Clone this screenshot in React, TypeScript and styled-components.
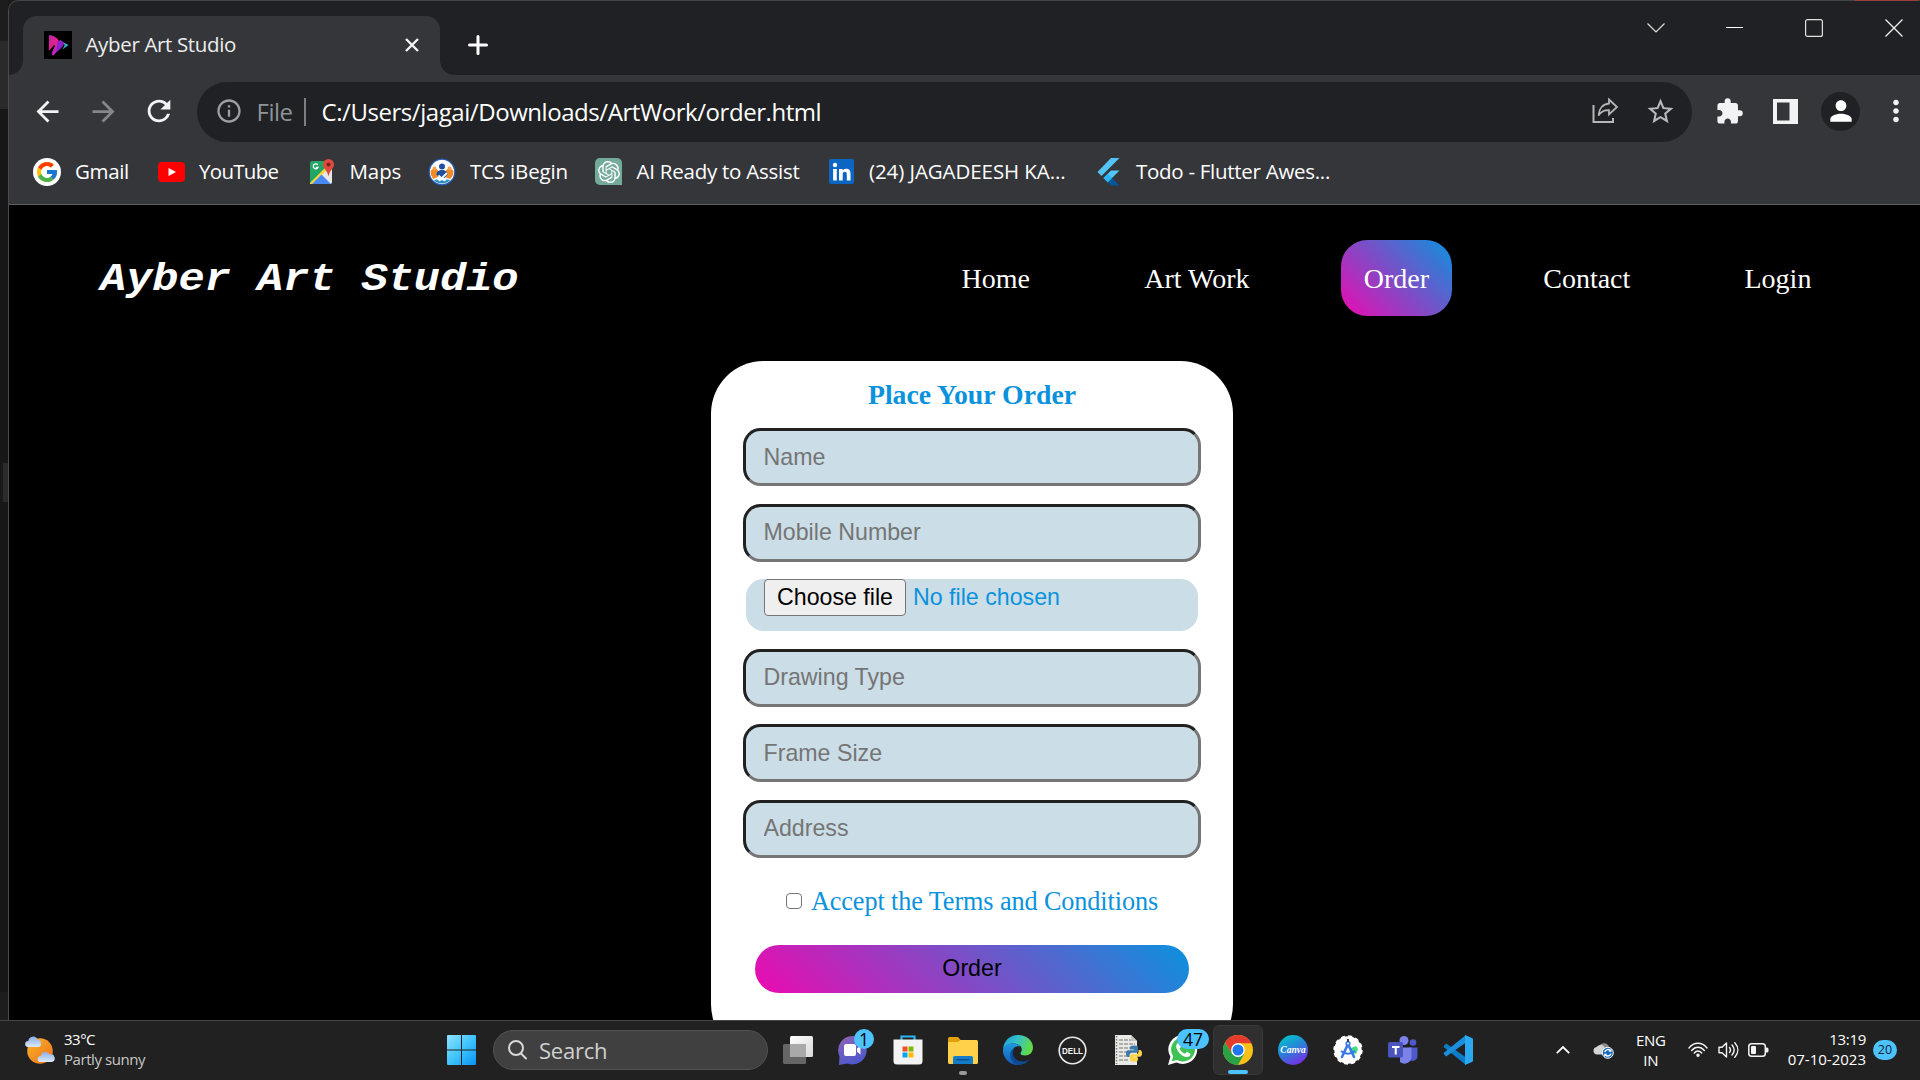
import React from 'react';
import styled, { createGlobalStyle, css } from 'styled-components';
import { FcGoogle } from 'react-icons/fc';
import { MdArrowBack, MdArrowForward, MdRefresh, MdInfoOutline, MdStarBorder, MdExtension, MdPerson, MdMoreVert } from 'react-icons/md';
import { SiOpenai } from 'react-icons/si';

const UI = `'Segoe UI', 'Open Sans', 'Noto Sans', sans-serif`;
const SERIF = `'Times New Roman', 'Liberation Serif', serif`;
const SANS = `Arial, 'Liberation Sans', sans-serif`;
const MONO = `'Courier New', 'Liberation Mono', monospace`;
const BLUE = '#0b92dd';
const GRADIENT = 'linear-gradient(45deg, #ec0ab0, #0b92dd)';

const GlobalStyle = createGlobalStyle`
  * { box-sizing: border-box; }
  body { margin: 0; background: #000; overflow: hidden; }
  svg { display: block; flex: none; }
`;

/* ---------- shell ---------- */
const Desktop = styled.div`
  width: 1920px;
  height: 1080px;
  display: flex;
  flex-direction: column;
  overflow: hidden;
  font-family: ${UI};
`;
const Upper = styled.div`
  display: flex;
  height: 1020px;
  background: #191919;
`;
const Behind = styled.div`
  flex: none;
  width: 8px;
  display: flex;
  flex-direction: column;
`;
const Strip = styled.div<{ $h: number; $c: string; $inset?: number }>`
  height: ${p => p.$h}px;
  margin-left: ${p => p.$inset ?? 0}px;
  background: ${p => p.$c};
`;
const Window = styled.div`
  position: relative;
  flex: 1;
  min-width: 0;
  display: flex;
  flex-direction: column;
  border-left: 1px solid #4a4a4a;
  border-top: 1px solid #444645;
  border-top-left-radius: 10px;
  background: #202124;
`;
const RedEdge = styled.div`
  position: absolute;
  top: -1px;
  right: 2px;
  width: 63px;
  height: 1px;
  background: #9a4038;
`;

/* ---------- title bar ---------- */
const TitleBar = styled.div`
  display: flex;
  height: 74px;
  padding-left: 14px;
`;
const Tab = styled.div`
  position: relative;
  display: flex;
  align-items: center;
  width: 417px;
  height: 59px;
  margin-top: 15px;
  padding: 0 21px 1px 21px;
  background: #35363a;
  border-radius: 14px 14px 0 0;
  &::before, &::after {
    content: '';
    position: absolute;
    bottom: 0;
    width: 14px;
    height: 14px;
  }
  &::before { left: -14px; background: radial-gradient(circle at 0 0, transparent 13.5px, #35363a 14px); }
  &::after { right: -14px; background: radial-gradient(circle at 100% 0, transparent 13.5px, #35363a 14px); }
`;
const Label = styled.span<{ $size: number; $ls?: number; $color?: string }>`
  font-size: ${p => p.$size}px;
  letter-spacing: ${p => p.$ls ?? 0}px;
  color: ${p => p.$color ?? '#fff'};
  line-height: 1.3;
  white-space: nowrap;
`;
const TabTitle = styled(Label)`
  flex: 1;
  margin-left: 13.5px;
  padding-bottom: 1px;
`;
const NewTab = styled.div`
  margin: 34px 0 0 28px;
`;
const Controls = styled.div`
  display: flex;
  flex: none;
  margin-left: auto;
  height: 53px;
`;
const Control = styled.div<{ $last?: boolean; $nudge?: number }>`
  display: flex;
  align-items: center;
  justify-content: ${p => (p.$last ? 'flex-start' : 'center')};
  width: ${p => (p.$last ? 66 : 80)}px;
  padding-left: ${p => (p.$last ? 31 : p.$nudge ?? 0)}px;
`;

/* ---------- toolbar ---------- */
const Toolbar = styled.div`
  display: flex;
  align-items: center;
  height: 74px;
  padding-left: 10px;
  background: #35363a;
  overflow: hidden;
`;
const Slot = styled.div<{ $w: number; $c?: string }>`
  display: flex;
  align-items: center;
  justify-content: center;
  flex: none;
  width: ${p => p.$w}px;
  height: 60px;
  padding-bottom: 1.5px;
  color: ${p => p.$c ?? '#f1f3f4'};
`;
const Omnibox = styled.div`
  display: flex;
  align-items: center;
  flex: none;
  width: 1495px;
  height: 60px;
  margin: 0 10px;
  padding: 0 4.5px 0 18px;
  border-radius: 30px;
  background: #202124;
`;
const Separator = styled.div`
  width: 2px;
  height: 28px;
  margin: 0 15.5px 0 13px;
  background: #7c7e82;
`;
const Path = styled(Label)`
  flex: 1;
  padding-bottom: 1px;
`;
const Scheme = styled(Label)`
  width: 34.5px;
  margin-left: 13.5px;
  padding-bottom: 1px;
`;
const Avatar = styled.div`
  display: flex;
  align-items: center;
  justify-content: center;
  width: 39px;
  height: 39px;
  border-radius: 50%;
  background: #202124;
`;

/* ---------- bookmarks ---------- */
const Bookmarks = styled.div`
  display: flex;
  height: 56px;
  padding: 0 0 10px 24px;
  background: #35363a;
  border-bottom: 1px solid #5d5e61;
`;
const Bookmark = styled.div<{ $w: number }>`
  display: flex;
  align-items: center;
  width: ${p => p.$w}px;
`;
const BookmarkIcon = styled.div`
  display: flex;
  align-items: center;
  justify-content: center;
  width: 28px;
  margin-right: 14px;
`;
const Disc = styled.div<{ $s: number; $bg: string; $r?: string }>`
  display: flex;
  align-items: center;
  justify-content: center;
  width: ${p => p.$s}px;
  height: ${p => p.$s}px;
  border-radius: ${p => p.$r ?? '50%'};
  background: ${p => p.$bg};
  color: #fff;
`;

/* ---------- web page ---------- */
const Page = styled.div`
  flex: 1;
  display: flex;
  flex-direction: column;
  background: #000;
  overflow: hidden;
`;
const Header = styled.header`
  display: flex;
  align-items: center;
  justify-content: space-between;
  height: 156px;
  padding: 0 86px 10px 91px;
  flex: none;
`;
const Brand = styled.h1`
  margin: 2px 0 0;
  font: italic bold 43.75px/50px ${MONO};
  letter-spacing: -0.1px;
  color: #fff;
  transform: scaleY(0.9);
  transform-origin: 0 37px;
`;
const Nav = styled.nav`
  display: flex;
  gap: 69px;
`;
const NavItem = styled.a<{ $active?: boolean }>`
  padding: 22.5px 22.6px;
  border-radius: 26.25px;
  font: 28px/31px ${SERIF};
  color: #fff;
  ${p => p.$active && css`background: ${GRADIENT};`}
`;
const Card = styled.form`
  align-self: flex-start;
  display: flex;
  flex-direction: column;
  align-items: center;
  flex: none;
  width: 522px;
  height: 696px;
  margin-left: 702px;
  border-radius: 52.5px;
  background: #fff;
`;
const CardTitle = styled.h2`
  margin: 18px 0 17.2px;
  font: bold 27.75px/32px ${SERIF};
  color: ${BLUE};
`;
const Field = styled.input`
  width: 458px;
  height: 58px;
  margin: 0 0 17.5px;
  padding: 0 17.5px 0.1px;
  border: 3px solid;
  border-color: #212121 #767676 #767676 #212121;
  border-radius: 17.5px;
  background: #cbdde6;
  font: 23.2px ${SANS};
  outline: none;
  &::placeholder { color: #757575; opacity: 1; }
`;
const FileField = styled.div`
  display: flex;
  align-items: flex-start;
  width: 452px;
  height: 52px;
  margin: 0 0 17.7px;
  padding-left: 18px;
  border-radius: 17.5px;
  background: #cbdde6;
  font: 23.2px/37px ${SANS};
  color: ${BLUE};
`;
const FileButton = styled.button`
  width: 142px;
  height: 37px;
  margin: 0 7px 0 0;
  padding: 0;
  border: 1px solid #767676;
  border-radius: 4px;
  background: #efefef;
  font: 23.2px ${SANS};
  color: #000;
`;
const Terms = styled.label`
  display: flex;
  align-items: center;
  margin-top: 11px;
  font: 26.25px/32px ${SERIF};
  letter-spacing: -0.11px;
  color: ${BLUE};
`;
const Check = styled.span`
  width: 16px;
  height: 16px;
  margin: 0 9px 3px 0;
  border: 1.5px solid #767676;
  border-radius: 4px;
  background: #fff;
`;
const Submit = styled.button`
  width: 434px;
  height: 48px;
  margin-top: 26.5px;
  padding: 0;
  border: 0;
  border-radius: 24px;
  background: ${GRADIENT};
  font: 23.2px ${SANS};
  color: #000;
`;

/* ---------- taskbar ---------- */
const Taskbar = styled.div`
  display: flex;
  align-items: center;
  height: 60px;
  padding: 0 0 1px 25px;
  border-top: 1px solid #454545;
  background: #212121;
`;
const Weather = styled.div`
  display: flex;
  align-items: center;
  gap: 9px;
  width: 409px;
`;
const Lines = styled.div<{ $align?: string; $lift?: number }>`
  display: flex;
  flex-direction: column;
  align-items: ${p => p.$align ?? 'flex-start'};
  margin-bottom: ${p => p.$lift ?? 3}px;
  & > span { line-height: 20px; }
`;
const AppSlot = styled.div<{ $active?: boolean }>`
  position: relative;
  display: flex;
  align-items: center;
  justify-content: center;
  width: 55px;
  height: 50px;
  flex: none;
  ${p => p.$active && css`
    width: 50px;
    margin: 0 2.5px;
    border-radius: 6px;
    background: #2f2f2f;
    border: 1px solid #393939;
  `}
`;
const Search = styled.div`
  display: flex;
  align-items: center;
  gap: 12px;
  width: 275px;
  height: 40px;
  margin: 0 2px 0 4px;
  padding-left: 14px;
  border-radius: 20px;
  border: 1px solid #525252;
  background: #404040;
`;
const Badge = styled.span<{ $w: number; $x: number }>`
  position: absolute;
  left: ${p => p.$x}px;
  top: 4px;
  width: ${p => p.$w}px;
  height: 20px;
  border-radius: 10px;
  background: #4cc2ff;
  color: #000;
  font-size: 17.5px;
  line-height: 20px;
  text-align: center;
`;
const Running = styled.span<{ $w: number; $c: string }>`
  position: absolute;
  bottom: 0;
  left: calc(50% - ${p => p.$w / 2}px);
  width: ${p => p.$w}px;
  height: 4px;
  border-radius: 2px;
  background: ${p => p.$c};
`;
const Tray = styled.div`
  display: flex;
  align-items: center;
  margin-left: auto;
  padding-right: 23px;
`;
const Count = styled.span`
  width: 24px;
  height: 20px;
  margin-left: 7px;
  border-radius: 10px;
  background: #4cc2ff;
  color: #10222c;
  font-size: 12.5px;
  line-height: 20px;
  text-align: center;
`;
const Gap = styled.div<{ $w: number }>`
  width: ${p => p.$w}px;
`;

/* ---------- drawings ---------- */
const Favicon = () => (
  <svg width="28" height="28" viewBox="0 0 28 28">
    <defs>
      <linearGradient id="fv" x1="0" y1="0" x2="0.7" y2="1"><stop offset="0" stopColor="#b02aa8" /><stop offset=".5" stopColor="#e81e8c" /><stop offset="1" stopColor="#9a2be2" /></linearGradient>
    </defs>
    <rect width="28" height="28" fill="#000" />
    <path d="M5 4c5 .5 9.500 3.500 11 8-.5 5-3 9-6.500 12.500-1.500 0-2-1-1.500-3l2.500-8L4.800 20z" fill="url(#fv)" />
    <path d="M13.500 10.500l3-1.500 4 3-2 3.500-6 6z" fill="#8a22c8" />
    <path d="M19.500 11.500l5 2.500-6 4.500 2.200-4z" fill="#35b6d0" />
    <path d="M10.500 14.500l-4 8" stroke="#000" strokeWidth="1.200" />
  </svg>
);
const Maps = () => (
  <svg width="26" height="26" viewBox="0 0 26 26">
    <rect x="1" y="2" width="22" height="23" rx="2" fill="#23a566" />
    <path d="M1 25L23 3v20a2 2 0 0 1-2 2z" fill="#e8e8e8" />
    <path d="M1 24L18 7l2 2L4 25H1z" fill="#fdd83c" />
    <path d="M3 25l9.500-9.500L22 25z" fill="#4a8af4" />
    <path d="M8.800 5.800A2.500 2.500 0 1 0 9 8.500H6.800" fill="none" stroke="#fff" strokeWidth="1.300" />
    <path d="M19.500 0a5.500 5.500 0 0 1 5.500 5.500c0 4-4.500 6-5.500 12-1-6-5.500-8-5.500-12A5.500 5.500 0 0 1 19.500 0z" fill="#dd4b3e" />
    <circle cx="19.500" cy="5.500" r="2" fill="#7a2018" />
  </svg>
);
const Tcs = () => (
  <svg width="28" height="28" viewBox="0 0 28 28">
    <circle cx="14" cy="14" r="12.800" fill="#fff" stroke="#2458b0" strokeWidth="1.300" />
    <path d="M2.500 13c2-2.500 5-3 7-1l4 4 5-4c2-2 5-1.500 7 1 0 3-1 6-3.500 8l-5-2H9.500l-4 2c-2-2-3-5-3-8z" fill="#f08a24" />
    <circle cx="6.500" cy="10.500" r="2" fill="#f5a04a" /><circle cx="21.500" cy="10.500" r="2" fill="#f5a04a" />
    <circle cx="14" cy="8.500" r="3" fill="#1d4fa3" />
    <path d="M8.500 16.500c0-3 2.500-4.500 5.500-4.500s5.500 1.500 5.500 4.500l-3 3.500h-5z" fill="#1d4fa3" />
    <path d="M10.500 17.500l3 3 5.500-5.500" fill="none" stroke="#fff" strokeWidth="1.800" />
    <path d="M6 22.500c2-1.500 4-1.500 5 1l3-1.500 3 1.500c1-2.500 3-2.500 5-1-4 4-12 4-16 0z" fill="#2a8fc4" />
  </svg>
);
const LinkedIn = () => (
  <svg width="25" height="25" viewBox="0 0 25 25">
    <rect width="25" height="25" rx="2" fill="#0a66c2" />
    <circle cx="6" cy="6" r="2.200" fill="#fff" />
    <path d="M4.100 10h3.700v11.500H4.100zM10 10h3.500v1.600c.6-1 1.900-1.900 3.700-1.900 3.500 0 4.300 2.200 4.300 5.300v6.500h-3.700v-5.800c0-1.500-.2-2.900-2-2.900s-2.100 1.400-2.100 2.900v5.800H10z" fill="#fff" />
  </svg>
);
const Flutter = () => (
  <svg width="23" height="28" viewBox="0 0 23 28">
    <path d="M14 0h8.500L4.500 18 0.500 14z" fill="#54c5f8" />
    <path d="M14 12.500h8.500l-7.500 7.500-4.200 4.200-4.300-4.200z" fill="#54c5f8" />
    <path d="M10.800 24.200L15 20l7.500 7.500H14z" fill="#01579b" />
    <path d="M6.500 20l4.300-4.200L15 20l-4.200 4.200z" fill="#29b6f6" />
  </svg>
);
const YouTube = () => (
  <svg width="27" height="20" viewBox="0 0 27 20">
    <rect width="27" height="20" rx="4" fill="#f00" />
    <path d="M10.500 6l7.500 4-7.500 4z" fill="#fff" />
  </svg>
);
const Share = () => (
  <svg width="28" height="28" viewBox="0 0 28 28" fill="none" stroke="#b5b6b8" strokeWidth="2">
    <path d="M2.500 8v17h19.500v-4" />
    <path d="M18 2.500l8 7.500-8 7.500v-4.300c-4.500-.2-8 1.300-10.500 5.300C8 11.500 12 7 18 6.500z" strokeWidth="1.800" />
  </svg>
);
const SidePanel = () => (
  <svg width="25" height="25" viewBox="0 0 25 25">
    <path d="M0 0h25v25H0zM4 3.500v18h12.500v-18z" fill="#f1f3f4" fillRule="evenodd" />
  </svg>
);
const WeatherIcon = () => (
  <svg width="30" height="29" viewBox="0 0 30 29">
    <defs>
      <linearGradient id="sun" x1="0" y1="0" x2="1" y2="1"><stop offset="0" stopColor="#f9b52c" /><stop offset="1" stopColor="#f0701a" /></linearGradient>
      <linearGradient id="cl" x1="0" y1="0" x2="0" y2="1"><stop offset="0" stopColor="#8aaee8" /><stop offset="1" stopColor="#dce9fb" /></linearGradient>
    </defs>
    <circle cx="15" cy="15" r="12.800" fill="url(#sun)" />
    <path d="M3 11a3 3 0 0 1 .3-6A4.800 4.800 0 0 1 12.500 3.500 4 4 0 0 1 14 11z" fill="url(#cl)" />
    <path d="M15.500 26a3 3 0 0 1 .3-6 4.800 4.800 0 0 1 9-1.500 3.800 3.800 0 0 1 2 7.500z" fill="url(#cl)" />
  </svg>
);
const StartIcon = () => (
  <svg width="29" height="30" viewBox="0 0 29 30">
    <defs><linearGradient id="win" x1="0" y1="0" x2="1" y2="1"><stop offset="0" stopColor="#8fe2ff" /><stop offset=".5" stopColor="#3fc4fb" /><stop offset="1" stopColor="#0a94f5" /></linearGradient></defs>
    <path d="M1 0h13v14.500H0V1a1 1 0 0 1 1-1zM15 0h13a1 1 0 0 1 1 1v13.500H15zM0 15.500h14V30H1a1 1 0 0 1-1-1zM15 15.500h14V29a1 1 0 0 1-1 1H15z" fill="url(#win)" />
  </svg>
);
const SearchIcon = () => (
  <svg width="19" height="20" viewBox="0 0 19 20" fill="none" stroke="#d8d8d8" strokeWidth="2" strokeLinecap="round">
    <circle cx="8" cy="8" r="7" /><path d="M13 13.500l5 5" />
  </svg>
);
const TaskView = () => (
  <svg width="30" height="28" viewBox="0 0 30 28">
    <defs><linearGradient id="tv" x1="0" y1="0" x2="1" y2="1"><stop offset="0" stopColor="#fff" /><stop offset="1" stopColor="#d8d8d8" /></linearGradient></defs>
    <rect x="0" y="8" width="23" height="20" rx="1.500" fill="#666" />
    <rect x="7" y="0" width="23" height="21" rx="1.500" fill="url(#tv)" />
    <path d="M7 8h16v13H8.500A1.500 1.500 0 0 1 7 19.500z" fill="#a9a9a9" />
  </svg>
);
const Chat = () => (
  <svg width="29" height="29" viewBox="0 0 29 29">
    <defs><linearGradient id="ch" x1="0" y1="0" x2="0.400" y2="1"><stop offset="0" stopColor="#8f63b8" /><stop offset="1" stopColor="#5059c9" /></linearGradient></defs>
    <path d="M14.500 0a14.200 14.200 0 1 1-5 27.500L1 29l.5-8.500A14.300 14.300 0 0 1 14.500 0z" fill="url(#ch)" />
    <rect x="6" y="8" width="12" height="12" rx="2" fill="#fff" />
    <path d="M19 12.500l3.500-2.800v8.800L19 15.700z" fill="#fff" />
  </svg>
);
const Store = () => (
  <svg width="30" height="30" viewBox="0 0 30 30">
    <path d="M8.500 6V1.500h13V6" fill="none" stroke="#29b6f0" strokeWidth="2.200" />
    <path d="M.5 4.500h29V26a3.500 3.500 0 0 1-3.500 3.500H4A3.500 3.500 0 0 1 .5 26z" fill="#f3f3f3" />
    <path d="M9.500 11.500h5v5h-5z" fill="#f25022" /><path d="M15.500 11.500h5v5h-5z" fill="#7fba00" />
    <path d="M9.500 17.500h5v5h-5z" fill="#00a4ef" /><path d="M15.500 17.500h5v5h-5z" fill="#ffb900" />
  </svg>
);
const Folder = () => (
  <svg width="30" height="27" viewBox="0 0 30 27">
    <path d="M1.500 0H10l3 3.500V8H0V1.500A1.500 1.500 0 0 1 1.500 0z" fill="#e0a10c" />
    <path d="M0 5h10l2.500-2H28.500A1.500 1.500 0 0 1 30 4.500v21a1.500 1.500 0 0 1-1.500 1.500h-27A1.500 1.500 0 0 1 0 25.500z" fill="#ffd04a" />
    <path d="M5 27v-6a2 2 0 0 1 2-2h16a2 2 0 0 1 2 2v6z" fill="#127cc9" />
    <path d="M8.500 22.700h13" stroke="#0a4f8c" strokeWidth="1.400" />
  </svg>
);
const Edge = () => (
  <svg width="30" height="30" viewBox="0 0 30 30">
    <defs>
      <linearGradient id="e1" x1="0" y1="0" x2="1" y2="0.300"><stop offset="0" stopColor="#1b9de2" /><stop offset=".5" stopColor="#35c1c9" /><stop offset="1" stopColor="#5fd94a" /></linearGradient>
      <linearGradient id="e2" x1="0" y1="0" x2="0" y2="1"><stop offset="0" stopColor="#1f9ae0" /><stop offset="1" stopColor="#1258b5" /></linearGradient>
    </defs>
    <path d="M0 14C1 5.500 7 0 15 0c9 0 15 6 15 12.500 0 5-3.500 8-8 8-3 0-4.500-1-4.500-2 0-1 1.300-1.500 1.300-4C18.800 11 15 8.500 10.500 8.500 5.500 8.500 1.500 11 0 14z" fill="url(#e1)" />
    <path d="M0 14c1.500-3.500 5.500-5.500 10.500-5.500 3 0 5.500 1 7 3-5-1.500-8.500 2-8.500 7 0 6 5 10.500 10 11A15 15 0 0 1 0 14z" fill="url(#e2)" />
    <path d="M11.500 13.500c-4 5 0 13 8 13 3 0 6-1 8.500-4-3 5-8 7.500-13 7.500-5.500-2-9-7.500-7.500-12.500.8-2.500 2.500-3.800 4-4z" fill="#0c4a94" />
  </svg>
);
const PyDoc = () => (
  <svg width="22" height="30" viewBox="0 0 22 30">
    <path d="M0 0h16l6 6v24H0z" fill="#e9e9e6" />
    <path d="M4 5h12M4 9h16M4 13h16M4 17h10M4 21h8M4 25h9" stroke="#9b9b98" strokeWidth="1.300" strokeDasharray="4 1" />
    <path d="M1.500 1v28" stroke="#777" strokeWidth="1.500" strokeDasharray="1.500 1.500" />
    <path d="M16 0v6h6z" fill="#c4c4c0" />
  </svg>
);
const PyStack = styled.div`
  position: relative;
  width: 27px;
  height: 30px;
  margin-left: 1px;
`;
const PySnakes = () => (
  <svg width="16" height="17" viewBox="0 0 16 16">
    <path d="M8 0c-3 0-4 .8-4 2.300V4h4.200v.8H2.200C.8 4.800 0 6 0 8s.8 3.500 2 3.500h1.500V9.700C3.500 8.200 4.700 7.200 6 7.200h4c1.300 0 2-.9 2-2V2.300C12 .8 11 0 8 0z" fill="#3b78ab" />
    <path d="M8 16c3 0 4-.8 4-2.300V12H7.800v-.8h6c1.400 0 2.200-1.200 2.200-3.200s-.8-3.500-2-3.500h-1.500v1.800c0 1.500-1.200 2.500-2.500 2.500H6c-1.300 0-2 .9-2 2v2.900C4 15.200 5 16 8 16z" fill="#ffd343" />
  </svg>
);
const SnakeSpot = styled.div`
  position: absolute;
  right: 0;
  top: 10px;
`;
const Dell = () => (
  <svg width="29" height="29" viewBox="0 0 29 29">
    <circle cx="14.500" cy="14.500" r="13.300" fill="none" stroke="#e8e8e8" strokeWidth="1.600" />
    <text x="14.500" y="18" textAnchor="middle" textLength="21" lengthAdjust="spacingAndGlyphs" fontFamily="Liberation Sans" fontWeight="bold" fontSize="9.500" fill="#f4f4f4">DELL</text>
  </svg>
);
const WhatsApp = () => (
  <svg width="30" height="30" viewBox="0 0 30 30">
    <path d="M15.300 0A14.500 14.500 0 1 1 8.500 27.600L0 30l2.400-8.200A14.500 14.500 0 0 1 15.300 0z" fill="#fff" />
    <path d="M15.400 2.500A12 12 0 1 1 9 24.900L3.700 26.300 5.200 21.200A12 12 0 0 1 15.400 2.500z" fill="#3ec254" />
    <path d="M10 8c-2 1-2.500 3.500-1 6.500 2 4 5.500 7 9.500 7.500 2 .2 4-1 4-3.300l-3.500-1.900-1.900 2c-2.500-.9-4.600-3-5.600-5.300l1.600-1.800L11.700 8z" fill="#fff" />
  </svg>
);
const Chrome = () => (
  <svg width="30" height="30" viewBox="0 0 30 30">
    <circle cx="15" cy="15" r="15" fill="#fbc116" />
    <path d="M2 7.500A15 15 0 0 1 28.400 8.200H15l-6.200 10z" fill="#e33b2e" />
    <path d="M2 7.500A15 15 0 0 0 15 30l6.200-11L9 18.500z" fill="#2aa147" />
    <circle cx="15" cy="15" r="6.900" fill="#fff" />
    <circle cx="15" cy="15" r="5.500" fill="#1f78ee" />
  </svg>
);
const Canva = () => (
  <svg width="30" height="30" viewBox="0 0 30 30">
    <defs><linearGradient id="cv" x1="0.200" y1="0" x2="0.700" y2="1"><stop offset="0" stopColor="#00c4cc" /><stop offset=".5" stopColor="#2a7fd8" /><stop offset="1" stopColor="#7d2ae8" /></linearGradient></defs>
    <circle cx="15" cy="15" r="15" fill="url(#cv)" />
    <text x="15" y="18.300" textAnchor="middle" fontFamily="Liberation Serif" fontStyle="italic" fontWeight="bold" fontSize="9.500" fill="#fff">Canva</text>
  </svg>
);
const Studio = () => (
  <svg width="30" height="30" viewBox="0 0 30 30">
    <circle cx="15" cy="15" r="13.700" fill="#fff" stroke="#fff" strokeWidth="2" strokeDasharray="4 3.150" />
    <path d="M18 13l5-2 2 3-2 5-5-1z" fill="#3ddc84" />
    <path d="M15 9L9 22M15 9l6 13" stroke="#3b78e7" strokeWidth="2.600" strokeLinecap="round" />
    <path d="M8 16c4 3.500 10 3.500 14 0" fill="none" stroke="#3b78e7" strokeWidth="2" />
    <circle cx="15" cy="8.500" r="2.600" fill="#3b78e7" /><circle cx="15" cy="8.500" r="1" fill="#fff" />
    <path d="M15 4v3" stroke="#263238" strokeWidth="1.800" />
  </svg>
);
const Teams = () => (
  <svg width="30" height="28" viewBox="0 0 30 28">
    <circle cx="25" cy="6.500" r="3.300" fill="#5059c9" />
    <path d="M21 11.500h8.500V20a5 5 0 0 1-8.500 3.500z" fill="#5059c9" />
    <circle cx="16" cy="4.500" r="4.500" fill="#7b83eb" />
    <path d="M12 11.500h11.500V21a7 7 0 0 1-11.500 5z" fill="#7b83eb" />
    <rect y="6" width="15" height="15.500" rx="1.500" fill="#4b53bc" />
    <path d="M4 10h7.500v2H8.800v6.500H6.700V12H4z" fill="#fff" />
  </svg>
);
const Code = () => (
  <svg width="30" height="30" viewBox="0 0 30 30">
    <path d="M1.200 10.500l2-2L23 22.500V30L1.200 12.500c-.6-.6-.6-1.400 0-2z" fill="#0c7bc8" />
    <path d="M1.200 19.500l2 2L23 7.500V0L1.200 17.500c-.6.600-.6 1.400 0 2z" fill="#1a8fdc" />
    <path d="M22 0l7 3a2 2 0 0 1 1 2v20a2 2 0 0 1-1 2l-7 3z" fill="#2aa8f2" />
  </svg>
);
const CloudSync = () => (
  <svg width="21" height="18" viewBox="0 0 21 18">
    <path d="M6 5a5.500 5.500 0 0 1 10 1l-3 6H6z" fill="#8c8c8c" />
    <path d="M4 13.500A3.800 3.800 0 0 1 3.500 6 5 5 0 0 1 12 7l1 6.500z" fill="#d4d4d4" />
    <circle cx="14.800" cy="11.800" r="5.500" fill="#1769b5" stroke="#fff" strokeWidth="1" />
    <path d="M11.800 11a3.300 3.300 0 0 1 5.500-1.500M17.900 12.600a3.300 3.300 0 0 1-5.500 1.500" fill="none" stroke="#fff" strokeWidth="1.400" />
    <path d="M18.500 7.800v3h-3zM11.200 15.800v-3h3z" fill="#fff" />
  </svg>
);
const Wifi = () => (
  <svg width="20" height="16" viewBox="0 0 20 16" fill="none" stroke="#f2f2f2" strokeWidth="1.500" strokeLinecap="round">
    <path d="M1 6C6-.2 14-.2 19 6M3.700 8.500c3.600-4.200 9-4.200 12.600 0M6.300 11c2.200-2.600 5.200-2.600 7.400 0" />
    <circle cx="10" cy="13.300" r="1" fill="#f2f2f2" />
  </svg>
);
const Volume = () => (
  <svg width="21" height="18" viewBox="0 0 21 18" fill="none" stroke="#f2f2f2" strokeWidth="1.400" strokeLinejoin="round" strokeLinecap="round">
    <path d="M1 6.300h3L8.500 2v14L4 11.700H1z" /><path d="M11.500 6.500c1.200 1.500 1.200 3.500 0 5M14 4c2.600 3 2.600 7 0 10M16.800 1.800c4 4.400 4 10 0 14.400" />
  </svg>
);
const Battery = () => (
  <svg width="21" height="14" viewBox="0 0 21 14">
    <rect x=".8" y=".8" width="16.500" height="12.400" rx="2.800" fill="none" stroke="#f2f2f2" strokeWidth="1.500" />
    <rect x="3" y="3" width="5" height="8" rx="1" fill="#f2f2f2" />
    <path d="M18 4.500h1a1.500 1.500 0 0 1 1.500 1.500v2A1.500 1.500 0 0 1 19 9.500h-1z" fill="#f2f2f2" />
  </svg>
);

const bookmarks = [
  { label: 'Gmail', w: 124, ls: -0.36, icon: <Disc $s={28} $bg="#fff"><FcGoogle size={24} /></Disc> },
  { label: 'YouTube', w: 150.5, ls: -0.7, icon: <YouTube /> },
  { label: 'Maps', w: 120.5, ls: -0.1, icon: <Maps /> },
  { label: 'TCS iBegin', w: 166.5, ls: -0.17, icon: <Tcs /> },
  { label: 'AI Ready to Assist', w: 232.5, ls: -0.24, icon: <Disc $s={27} $bg="#74aa9c" $r="5px 5px 0 5px"><SiOpenai size={22} /></Disc> },
  { label: '(24) JAGADEESH KA...', w: 267, ls: -0.08, icon: <LinkedIn /> },
  { label: 'Todo - Flutter Awes...', w: 260, ls: -0.28, icon: <Flutter /> },
];
const links = ['Home', 'Art Work', 'Order', 'Contact', 'Login'];

export default function App() {
  return (
    <Desktop>
      <GlobalStyle />
      <Upper>
        <Behind>
          <Strip $h={41} $c="#1d1d1d" />
          <Strip $h={68} $c="#2a2a2a" />
          <Strip $h={354} $c="#171717" />
          <Strip $h={39} $c="#2b2b2b" $inset={3} />
          <Strip $h={490} $c="#171717" />
          <Strip $h={28} $c="#1d1d1d" />
        </Behind>
        <Window>
          <RedEdge />
          <TitleBar>
            <Tab>
              <Favicon />
              <TabTitle $size={20.5} $ls={-0.35} $color="#eceded">Ayber Art Studio</TabTitle>
              <svg width="14" height="14" viewBox="0 0 14 14" stroke="#f1f3f4" strokeWidth="2.400"><path d="M1 1l12 12M13 1L1 13" /></svg>
            </Tab>
            <NewTab>
              <svg width="20" height="20" viewBox="0 0 20 20" stroke="#fff" strokeWidth="3" strokeLinecap="round"><path d="M10 1.500v17M1.500 10h17" /></svg>
            </NewTab>
            <Controls>
              <Control $nudge={3}><svg width="18" height="10" viewBox="0 0 18 10" fill="none" stroke="#e0e0e0" strokeWidth="1.200"><path d="M.5.5L9 9 17.500.5" /></svg></Control>
              <Control><svg width="17" height="2" viewBox="0 0 17 2"><rect width="17" height="1" fill="#fff" /></svg></Control>
              <Control><svg width="18" height="18" viewBox="0 0 18 18" fill="none" stroke="#e0e0e0" strokeWidth="1.200"><rect x=".6" y=".6" width="16.800" height="16.800" rx="2" /></svg></Control>
              <Control $last><svg width="18" height="18" viewBox="0 0 18 18" stroke="#f0f0f0" strokeWidth="1.300"><path d="M.5.5l17 17M17.500.5l-17 17" /></svg></Control>
            </Controls>
          </TitleBar>
          <Toolbar>
            <Slot $w={56}><MdArrowBack size={33} /></Slot>
            <Slot $w={56} $c="#86878a"><MdArrowForward size={33} /></Slot>
            <Slot $w={56}><MdRefresh size={34} /></Slot>
            <Omnibox>
              <Slot $w={28} $c="#9aa0a6"><MdInfoOutline size={28} /></Slot>
              <Scheme $size={24} $ls={-0.5} $color="#8e9398">File</Scheme>
              <Separator />
              <Path $size={24} $ls={-0.44}>C:/Users/jagai/Downloads/ArtWork/order.html</Path>
              <Slot $w={55}><Share /></Slot>
              <Slot $w={55} $c="#b9babc"><MdStarBorder size={31} /></Slot>
            </Omnibox>
            <Slot $w={55.5}><MdExtension size={29} /></Slot>
            <Slot $w={55.5}><SidePanel /></Slot>
            <Slot $w={55.5}><Avatar><MdPerson size={32} color="#fff" /></Avatar></Slot>
            <Slot $w={55.5}><MdMoreVert size={34} /></Slot>
          </Toolbar>
          <Bookmarks>
            {bookmarks.map(b => (
              <Bookmark key={b.label} $w={b.w}>
                <BookmarkIcon>{b.icon}</BookmarkIcon>
                <Label $size={20.5} $ls={b.ls}>{b.label}</Label>
              </Bookmark>
            ))}
          </Bookmarks>
          <Page>
            <Header>
              <Brand>Ayber Art Studio</Brand>
              <Nav>
                {links.map(l => <NavItem key={l} $active={l === 'Order'}>{l}</NavItem>)}
              </Nav>
            </Header>
            <Card>
              <CardTitle>Place Your Order</CardTitle>
              <Field placeholder="Name" />
              <Field placeholder="Mobile Number" />
              <FileField>
                <FileButton type="button">Choose file</FileButton>
                No file chosen
              </FileField>
              <Field placeholder="Drawing Type" />
              <Field placeholder="Frame Size" />
              <Field placeholder="Address" />
              <Terms><Check />Accept the Terms and Conditions</Terms>
              <Submit type="button">Order</Submit>
            </Card>
          </Page>
        </Window>
      </Upper>
      <Taskbar>
        <Weather>
          <WeatherIcon />
          <Lines>
            <Label $size={15} $ls={-0.5}>33°C</Label>
            <Label $size={15} $ls={-0.43} $color="#c8c8c8">Partly sunny</Label>
          </Lines>
        </Weather>
        <AppSlot><StartIcon /></AppSlot>
        <Search><SearchIcon /><Label $size={22} $ls={-0.23} $color="#d0d0d0">Search</Label></Search>
        <AppSlot><TaskView /></AppSlot>
        <AppSlot><Chat /><Badge $w={20} $x={29}>1</Badge></AppSlot>
        <AppSlot><Store /></AppSlot>
        <AppSlot><Folder /><Running $w={8} $c="#9a9a9a" /></AppSlot>
        <AppSlot><Edge /></AppSlot>
        <AppSlot><Dell /></AppSlot>
        <AppSlot><PyStack><PyDoc /><SnakeSpot><PySnakes /></SnakeSpot></PyStack></AppSlot>
        <AppSlot><WhatsApp /><Badge $w={32} $x={22}>47</Badge></AppSlot>
        <AppSlot $active><Chrome /><Running $w={20} $c="#4cc2ff" /></AppSlot>
        <AppSlot><Canva /></AppSlot>
        <AppSlot><Studio /></AppSlot>
        <AppSlot><Teams /></AppSlot>
        <AppSlot><Code /></AppSlot>
        <Tray>
          <svg width="14" height="8" viewBox="0 0 14 8" fill="none" stroke="#fff" strokeWidth="1.800"><path d="M.8 7.200L7 1l6.200 6.200" /></svg>
          <Gap $w={22.5} />
          <CloudSync />
          <Gap $w={22.5} />
          <Lines $align="center" $lift={1}>
            <Label $size={15} $ls={-0.3}>ENG</Label>
            <Label $size={15}>IN</Label>
          </Lines>
          <Gap $w={22} />
          <Wifi /><Gap $w={10} /><Volume /><Gap $w={9} /><Battery />
          <Gap $w={19} />
          <Lines $align="flex-end">
            <Label $size={15} $ls={-0.3}>13:19</Label>
            <Label $size={15}>07-10-2023</Label>
          </Lines>
          <Count>20</Count>
        </Tray>
      </Taskbar>
    </Desktop>
  );
}
